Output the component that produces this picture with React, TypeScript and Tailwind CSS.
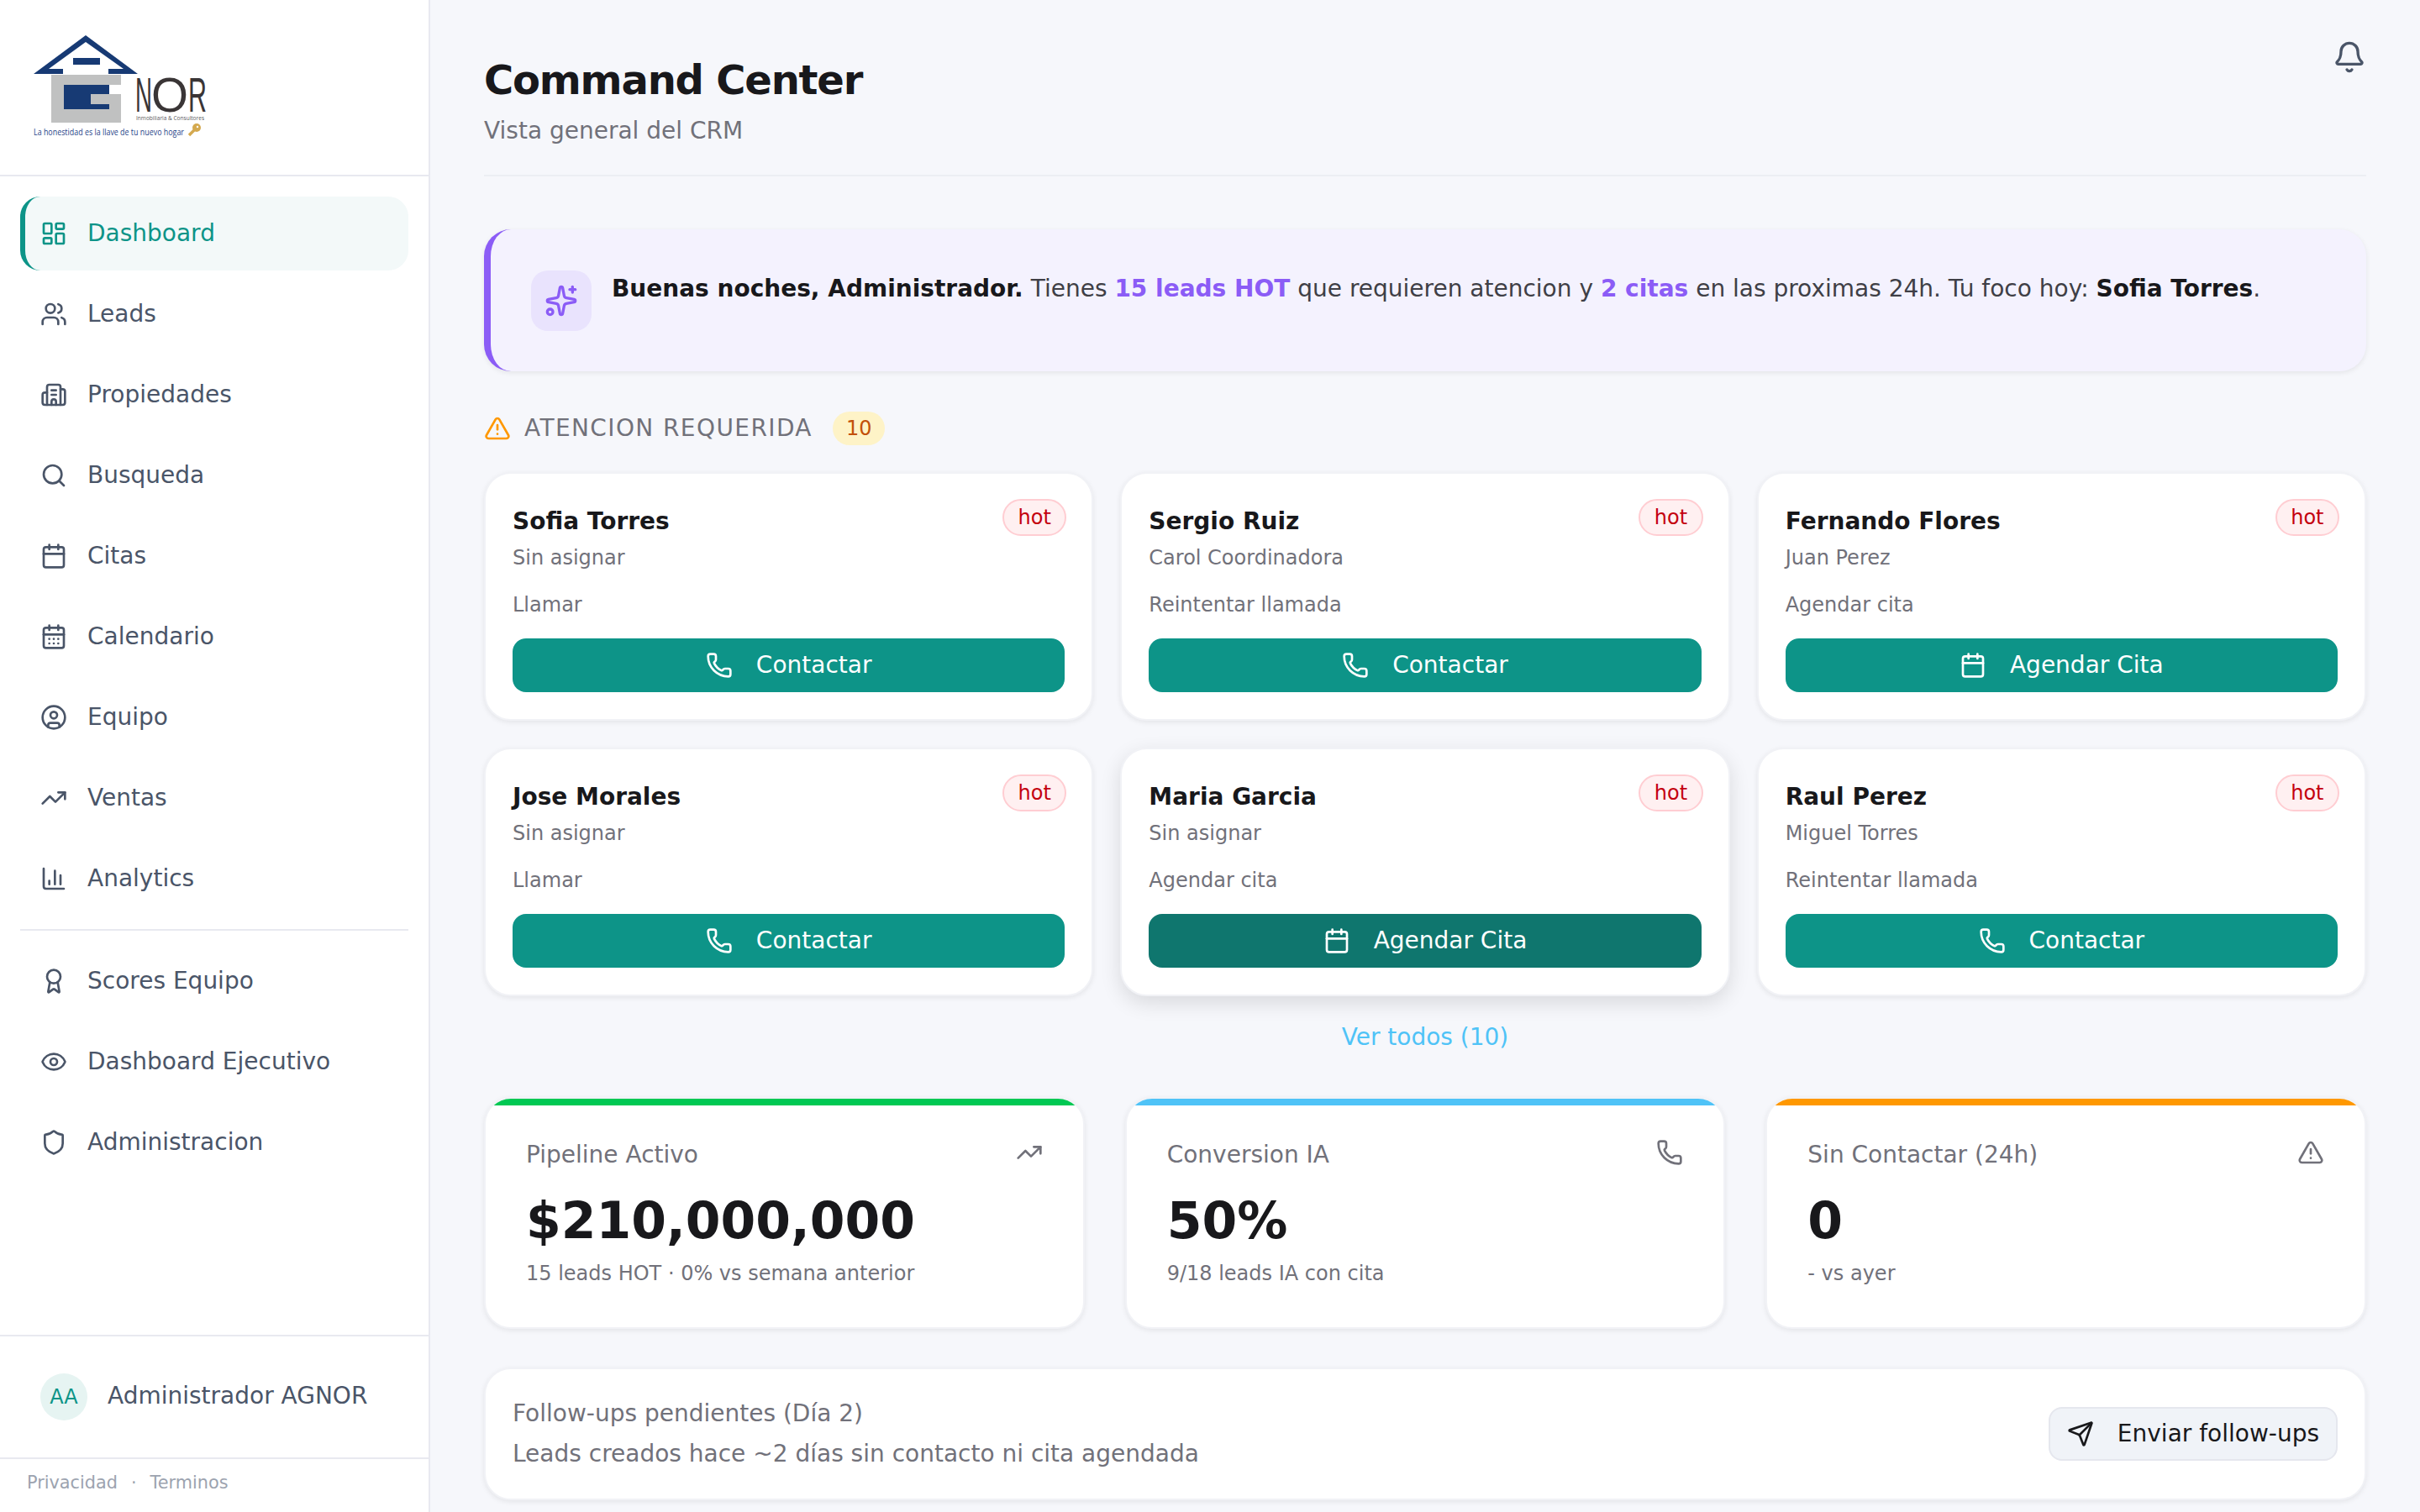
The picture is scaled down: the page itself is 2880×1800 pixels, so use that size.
import { LayoutDashboard, Users, Building2, Search, Calendar, CalendarDays, CircleUser, TrendingUp, ChartColumn, Award, Eye, Shield, Bell, Sparkles, TriangleAlert, Phone, Send } from "lucide-react";
import type { ComponentType } from "react";

type Ic = ComponentType<{ className?: string; strokeWidth?: number }>;

const navA: [Ic, string][] = [
  [Users, "Leads"],
  [Building2, "Propiedades"],
  [Search, "Busqueda"],
  [Calendar, "Citas"],
  [CalendarDays, "Calendario"],
  [CircleUser, "Equipo"],
  [TrendingUp, "Ventas"],
  [ChartColumn, "Analytics"],
];
const navB: [Ic, string][] = [
  [Award, "Scores Equipo"],
  [Eye, "Dashboard Ejecutivo"],
  [Shield, "Administracion"],
];

function NavItem({ icon: I, label }: { icon: Ic; label: string }) {
  return (
    <div className="flex h-[88px] items-center gap-[24px] pl-[24px] text-[28px] text-[#4a5568]">
      <I className="h-[32px] w-[32px] shrink-0" />
      <span>{label}</span>
    </div>
  );
}

function Logo() {
  return (
    <svg width="512" height="208" viewBox="0 0 512 208" className="block">
      <path d="M40 88 L102 42 L164 88 L129 88 L129 82 L147 82 L102 50 L58 82 L75 82 L75 88 Z" fill="#173a74" />
      <rect x="87" y="69" width="32" height="8" fill="#173a74" />
      <rect x="61" y="89" width="83" height="57" fill="#c0c1c1" />
      <rect x="76" y="101" width="54" height="29" fill="#173a74" />
      <rect x="130" y="101" width="14" height="11" fill="#fff" />
      <rect x="108" y="112" width="36" height="12" fill="#c0c1c1" />
      <g fill="#3a3536" fontFamily="'Liberation Sans', sans-serif" fontSize="57">
        <text x="161" y="133" textLength="20" lengthAdjust="spacingAndGlyphs">N</text>
        <text x="180" y="133" textLength="44" lengthAdjust="spacingAndGlyphs">O</text>
        <text x="224" y="133" textLength="22" lengthAdjust="spacingAndGlyphs">R</text>
      </g>
      <text x="162" y="143" fontSize="8" fill="#5b5b5e" textLength="81" lengthAdjust="spacingAndGlyphs" fontFamily="'Open Sans', sans-serif">Inmobiliaria &amp; Consultores</text>
      <text x="40" y="161" fontSize="10" fill="#1f4488" textLength="179" lengthAdjust="spacingAndGlyphs" fontFamily="'Open Sans', sans-serif">La honestidad es la llave de tu nuevo hogar</text>
      <circle cx="234" cy="152" r="5" fill="#d4a94f" />
      <path d="M231 155 L225 161" stroke="#d4a94f" strokeWidth="3.4" />
      <circle cx="235" cy="151" r="1.2" fill="#fff" />
    </svg>
  );
}

const leads: { name: string; owner: string; action: string; cta: string; hover?: boolean }[] = [
  { name: "Sofia Torres", owner: "Sin asignar", action: "Llamar", cta: "Contactar" },
  { name: "Sergio Ruiz", owner: "Carol Coordinadora", action: "Reintentar llamada", cta: "Contactar" },
  { name: "Fernando Flores", owner: "Juan Perez", action: "Agendar cita", cta: "Agendar Cita" },
  { name: "Jose Morales", owner: "Sin asignar", action: "Llamar", cta: "Contactar" },
  { name: "Maria Garcia", owner: "Sin asignar", action: "Agendar cita", cta: "Agendar Cita", hover: true },
  { name: "Raul Perez", owner: "Miguel Torres", action: "Reintentar llamada", cta: "Contactar" },
];

function LeadCard({ name, owner, action, cta, hover }: (typeof leads)[number]) {
  const I = cta === "Contactar" ? Phone : Calendar;
  return (
    <div className={"rounded-[32px] border-2 border-[#f1f2f6] bg-white p-[32px] " + (hover ? "shadow-[0_8px_24px_rgba(0,0,0,0.12)]" : "shadow-[0_2px_6px_rgba(0,0,0,0.08)]")}>
      <div className="flex items-start justify-between">
        <div className="text-[28px] font-bold leading-[50px] text-[#18181b]">{name}</div>
        <span className="-mr-[2px] -mt-[2px] rounded-full border-2 border-[#ffcdd2] bg-[#fff0f1] px-[16.5px] text-[24px] leading-[40px] text-[#c4000f]">hot</span>
      </div>
      <div className="text-[24px] leading-[36px] text-[#71717a]">{owner}</div>
      <div className="mt-[20px] text-[24px] leading-[36px] text-[#71717a]">{action}</div>
      <div className={"mt-[22px] flex h-[64px] items-center justify-center gap-[28px] rounded-[16px] text-[28px] text-white " + (hover ? "bg-[#0f766e]" : "bg-[#0d9488]")}>
        <I className="h-[32px] w-[32px]" />
        <span>{cta}</span>
      </div>
    </div>
  );
}

const stats: { title: string; value: string; sub: string; bar: string; icon: Ic }[] = [
  { title: "Pipeline Activo", value: "$210,000,000", sub: "15 leads HOT · 0% vs semana anterior", bar: "bg-[#00c853]", icon: TrendingUp },
  { title: "Conversion IA", value: "50%", sub: "9/18 leads IA con cita", bar: "bg-[#4fc3f7]", icon: Phone },
  { title: "Sin Contactar (24h)", value: "0", sub: "- vs ayer", bar: "bg-[#ff9800]", icon: TriangleAlert },
];

export default function App() {
  return (
    <div className="flex h-screen w-full overflow-hidden bg-[#f6f7fb] font-['DejaVu_Sans',sans-serif]">
      <aside className="flex h-full w-[512px] shrink-0 flex-col border-r-2 border-[#e8e9f0] bg-white">
        <div className="h-[210px] shrink-0 border-b-2 border-[#e8e9f0]"><Logo /></div>
        <nav className="flex flex-1 flex-col gap-[8px] p-[24px]">
          <div className="flex h-[88px] items-center gap-[24px] rounded-[24px] border-l-[6px] border-[#0d9488] bg-[#f3f9f9] pl-[18px] text-[28px] text-[#0d9488]">
            <LayoutDashboard className="h-[32px] w-[32px] shrink-0" />
            <span>Dashboard</span>
          </div>
          {navA.map(([i, l]) => <NavItem key={l} icon={i} label={l} />)}
          <div className="my-[8px] h-[2px] bg-[#e8e9f0]" />
          {navB.map(([i, l]) => <NavItem key={l} icon={i} label={l} />)}
        </nav>
        <div className="flex h-[146px] shrink-0 items-center gap-[24px] border-t-2 border-[#e8e9f0] px-[48px] text-[28px] text-[#4a5568]">
          <div className="flex h-[56px] w-[56px] items-center justify-center rounded-full bg-[#e6f4f2] text-[24px] text-[#0d9488]">AA</div>
          <span className="-mt-[3px]">Administrador AGNOR</span>
        </div>
        <div className="flex h-[65px] shrink-0 items-center gap-[16px] border-t-2 border-[#e8e9f0] pb-[6px] pl-[32px] text-[20.8px] text-[#9ca3af]">
          <span>Privacidad</span><span>·</span><span>Terminos</span>
        </div>
      </aside>

      <main className="min-w-0 flex-1 px-[64px]">
        <header className="flex h-[210px] items-start justify-between border-b-2 border-[#eceef3] pt-[64px]">
          <div>
            <h1 className="text-[48px] font-bold leading-[62px] tracking-[-0.025em] text-[#18181b]">Command Center</h1>
            <p className="mt-[10px] text-[28px] leading-[40px] text-[#71717a]">Vista general del CRM</p>
          </div>
          <Bell className="-mt-[16px] h-[40px] w-[40px] text-[#4a5568]" />
        </header>

        <section className="mt-[63px] flex h-[169px] gap-[24px] rounded-[32px] border-l-[8px] border-[#8b5cf6] bg-[#f4f2fe] px-[48px] pt-[49px] shadow-[0_2px_6px_rgba(0,0,0,0.08)]">
          <div className="flex h-[72px] w-[72px] shrink-0 items-center justify-center rounded-[20px] bg-[#e9e3fd] text-[#8b5cf6]">
            <Sparkles className="h-[40px] w-[40px]" />
          </div>
          <p className="text-[28px] leading-[44px] text-[#3f3f46]">
            <b className="text-[#18181b]">Buenas noches, Administrador.</b> Tienes <b className="text-[#8b5cf6]">15 leads HOT</b> que requieren atencion y <b className="text-[#8b5cf6]">2 citas</b> en las proximas 24h. Tu foco hoy: <b className="text-[#18181b]">Sofia Torres</b>.
          </p>
        </section>

        <div className="mt-[48px] flex h-[40px] items-center">
          <TriangleAlert className="h-[32px] w-[32px] text-[#ff9800]" />
          <span className="ml-[16px] -mt-[1px] text-[28px] tracking-[0.05em] text-[#71717a]">ATENCION REQUERIDA</span>
          <span className="ml-[24px] flex h-[40px] items-center rounded-full bg-[#fef3c7] px-[16px] text-[24px] text-[#c2500a]">10</span>
        </div>

        <div className="mt-[32px] grid grid-cols-3 gap-[32px]">
          {leads.map((l) => <LeadCard key={l.name} {...l} />)}
        </div>

        <div className="mt-[29px] text-center text-[28px] leading-[40px] text-[#4fc3f7]">Ver todos (10)</div>

        <div className="mt-[51px] grid grid-cols-3 gap-[48px]">
          {stats.map((s) => (
            <div key={s.title} className="relative h-[276px] overflow-hidden rounded-[32px] border-2 border-[#f1f2f6] bg-white px-[48px] pt-[49px] shadow-[0_2px_6px_rgba(0,0,0,0.08)]">
              <div className={"absolute inset-x-0 top-0 h-[8px] " + s.bar} />
              <div className="flex items-start justify-between">
                <span className="text-[28px] leading-[36px] text-[#71717a]">{s.title}</span>
                <s.icon className="-mt-[1px] h-[32px] w-[32px] text-[#71717a]" />
              </div>
              <div className="mt-[23px] text-[60px] font-bold leading-[74px] text-[#18181b]">{s.value}</div>
              <div className="mt-[8px] text-[24px] leading-[36px] text-[#71717a]">{s.sub}</div>
            </div>
          ))}
        </div>

        <div className="mt-[46px] flex h-[158px] items-center justify-between rounded-[32px] border-2 border-[#f1f2f6] bg-white pl-[32px] pr-[32px] shadow-[0_2px_6px_rgba(0,0,0,0.08)]">
          <div className="text-[28px] leading-[48px] text-[#71717a]">
            <div>Follow-ups pendientes (Día 2)</div>
            <div>Leads creados hace ~2 días sin contacto ni cita agendada</div>
          </div>
          <div className="flex h-[64px] items-center gap-[28px] rounded-[16px] border-2 border-[#e5e7ee] bg-[#f0f3f8] px-[20px] text-[28px] text-[#18181b]">
            <Send className="h-[32px] w-[32px]" />
            <span>Enviar follow-ups</span>
          </div>
        </div>
      </main>
    </div>
  );
}
